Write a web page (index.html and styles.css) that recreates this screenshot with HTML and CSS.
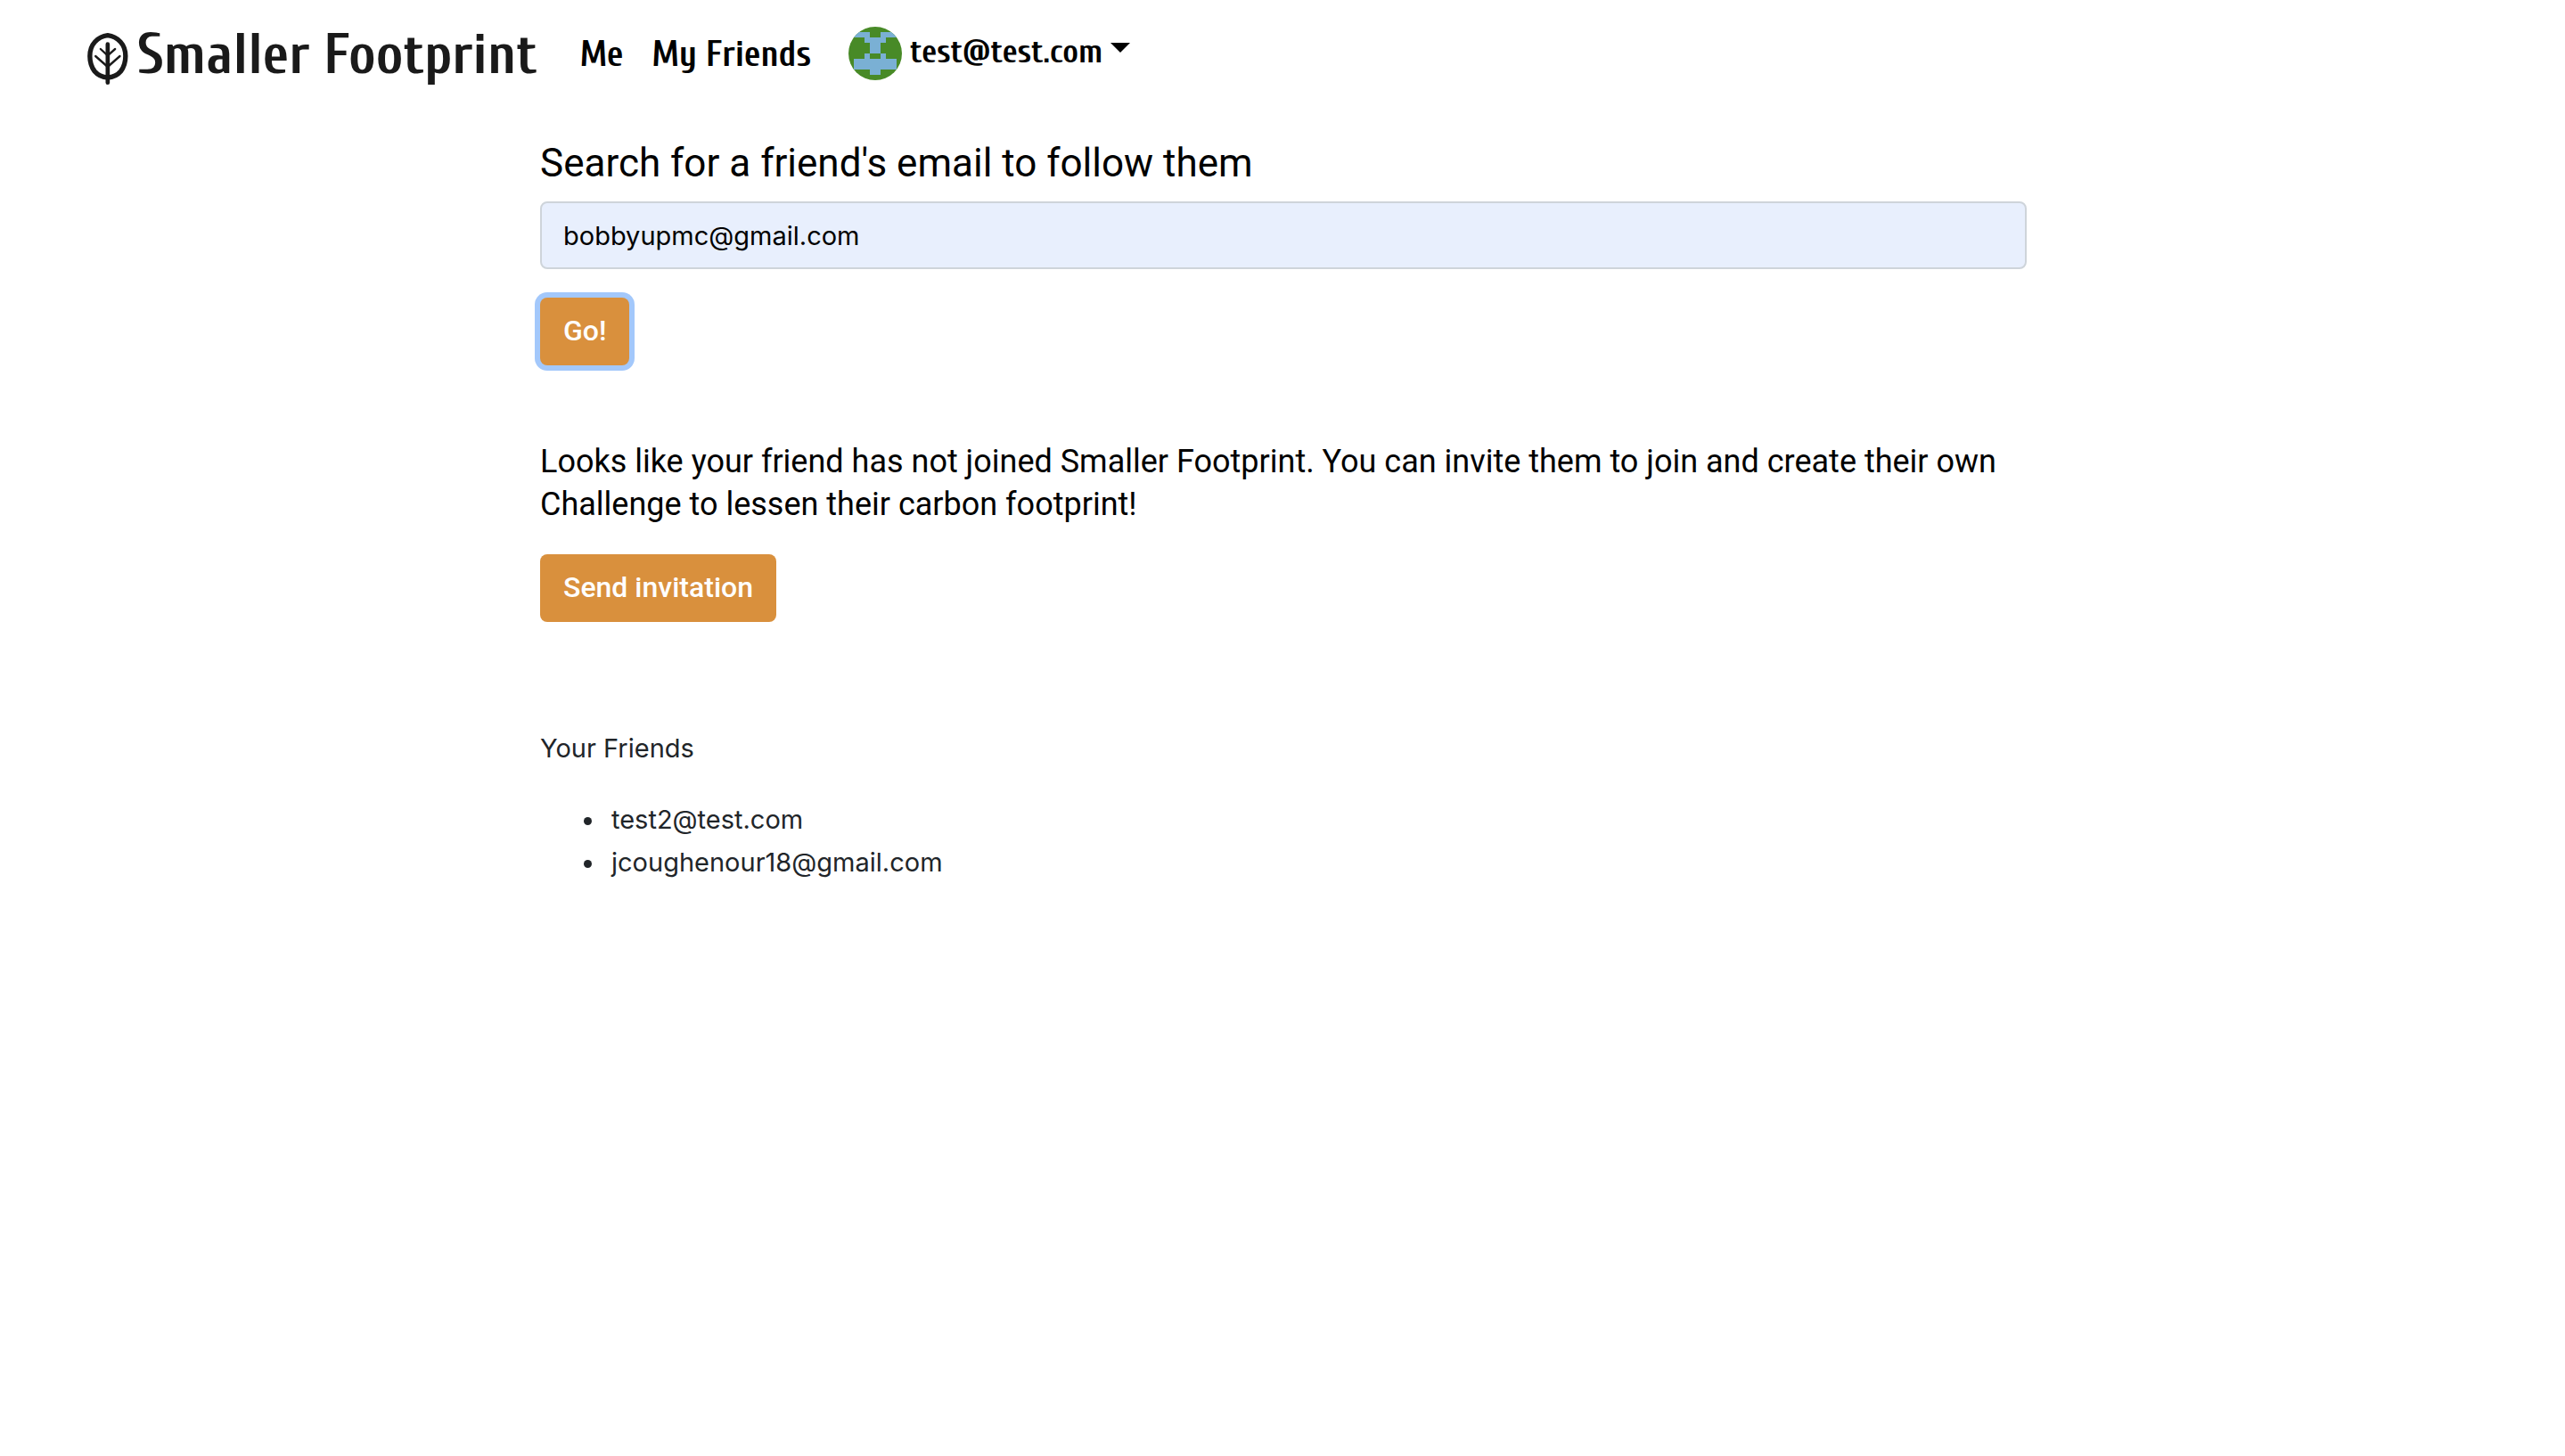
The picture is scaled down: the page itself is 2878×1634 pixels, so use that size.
FILE: index.html
```html
<!DOCTYPE html>
<html lang="en">
<head>
<meta charset="utf-8">
<meta name="viewport" content="width=device-width, initial-scale=1">
<title>Smaller Footprint</title>
<link rel="stylesheet" href="styles.css">
</head>
<body>
<header class="navbar">
  <a class="brand" href="#">
    <svg class="brand-icon" viewBox="24 33 137 180" aria-hidden="true" fill="none" stroke="currentColor" stroke-linecap="round" stroke-linejoin="round">
      <path stroke-width="16" d="M92 44C108 46 124 54 135 66C147 79 152 96 152 114C152 134 146 152 136 165C126 177 110 185 92 186C74 185 58 177 48 165C38 152 32 134 32 114C32 96 37 79 49 66C60 54 76 46 92 44Z"/>
      <path stroke-width="14" d="M92 74V203"/>
      <path stroke-width="7" d="M68 90L92 112L117 90M51 114L92 150L133 114"/>
    </svg>
    <span class="brand-name">Smaller Footprint</span>
  </a>
  <nav class="links">
    <a class="nav-link" href="#">Me</a>
    <a class="nav-link" href="#">My Friends</a>
  </nav>
  <button class="account" type="button" aria-haspopup="true">
    <svg class="avatar" viewBox="0 0 10 10" shape-rendering="crispEdges" aria-hidden="true">
      <path fill="#488a27" d="M0 0H10V10H0Z"/>
      <path fill="#7ab0d4" d="M0 1H4V2H6V1H10V2H7V3H6V5H7V6H9V8H6V9H4V8H1V6H3V5H4V3H3V2H0ZM4 5V6H6V5Z" fill-rule="evenodd"/>
    </svg>
    <span class="account-name">test@test.com</span>
    <span class="caret"></span>
  </button>
</header>
<main class="content">
  <form class="search">
    <label class="search-label" for="email">Search for a friend's email to follow them</label>
    <input class="field" id="email" type="email" value="bobbyupmc@gmail.com">
    <button class="btn btn-focused" type="button">Go!</button>
  </form>
  <section class="invite">
    <p class="message">Looks like your friend has not joined Smaller Footprint. You can invite them to join and create their own Challenge to lessen their carbon footprint!</p>
    <button class="btn" type="button">Send invitation</button>
  </section>
  <section class="friends">
    <p class="friends-title">Your Friends</p>
    <ul class="friends-list">
      <li>test2@test.com</li>
      <li>jcoughenour18@gmail.com</li>
    </ul>
  </section>
</main>
</body>
</html>
```
FILE: styles.css
```css
* { box-sizing: border-box; }
body {
  margin: 0;
  background: #fff;
  color: #212529;
  font: 32px/48px Roboto, sans-serif;
}
.navbar {
  display: flex;
  align-items: center;
  height: 120px;
  padding: 0 98px;
  font-family: "Liberation Sans Narrow", "Cuprum", sans-serif;
  font-weight: 700;
}
.brand {
  display: flex;
  align-items: center;
  gap: 10px;
  color: #1a1a1a;
  font-size: 64px;
  line-height: 96px;
  text-decoration: none;
}
.brand-icon { width: 46px; height: 60px; margin-top: 12px; }
.brand-name { padding-top: 3px; }
.links { display: flex; gap: 32px; margin-left: 48px; }
.nav-link { padding-top: 1px; color: #000; font-size: 40px; text-decoration: none; }
.account {
  display: flex;
  align-items: center;
  gap: 9px;
  margin-left: 42px;
  padding: 0;
  border: 0;
  background: none;
  color: #000;
  font: inherit;
  font-size: 37px;
}
.avatar { width: 60px; height: 60px; border-radius: 50%; }
.account-name { padding-bottom: 2px; }
.caret {
  align-self: flex-start;
  margin-top: 18px;
  border: 11px solid transparent;
  border-top-color: #000;
  border-bottom: 0;
}
.content {
  max-width: 1670px;
  margin: 0 auto;
  padding: 36px 0 0 2px;
}
.search { display: flex; flex-direction: column; align-items: flex-start; }
.search-label { margin-bottom: 16px; color: #000; font-size: 44px; line-height: 54px; }
.field {
  width: 100%;
  height: 76px;
  margin-bottom: 32px;
  padding: 12px 24px;
  border: 2px solid #ced4da;
  border-radius: 8px;
  background: #e8effd;
  color: #000;
  font: 29px/48px Inter, sans-serif;
}
.btn {
  height: 76px;
  padding: 12px 26px 14px;
  border: 0;
  border-radius: 8px;
  background: #d9903d;
  color: #fff;
  font: inherit;
  font-weight: 500;
}
.btn-focused { box-shadow: 0 0 0 6px #a3c8fb; }
.invite { margin-top: 84px; }
.message { margin: 0 0 32px; color: #000; font-size: 36px; }
.friends { margin-top: 118px; font: 29px/48px Inter, sans-serif; }
.friends-title { margin: 0 0 32px; }
.friends-list { margin: 0; padding-left: 74px; }
.friends-list li { padding-left: 6px; }
```
